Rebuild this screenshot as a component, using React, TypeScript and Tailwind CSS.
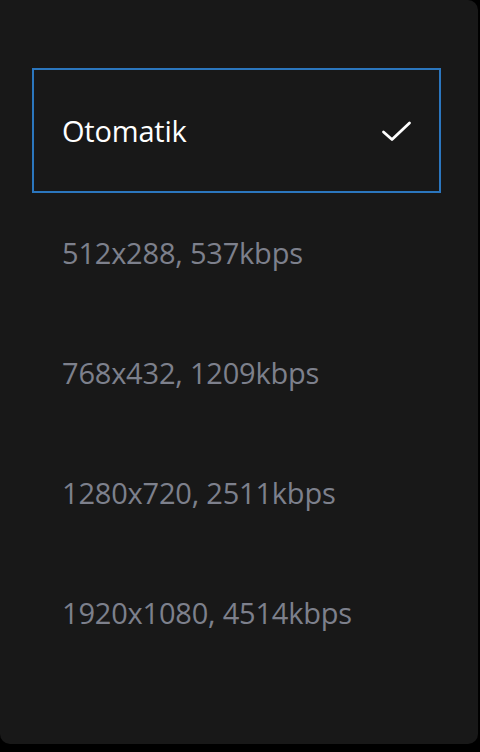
import React from "react";

const options = [
  "512x288, 537kbps",
  "768x432, 1209kbps",
  "1280x720, 2511kbps",
  "1920x1080, 4514kbps",
];

export default function App() {
  return (
    <div className="w-[480px] h-[752px] bg-black" style={{ fontFamily: '"Open Sans", "Noto Sans", sans-serif' }}>
      <div className="w-[478px] h-[744px] bg-[#181818] rounded-tr-[10px] rounded-b-[10px] pt-[68px] pl-[32px] pr-[37px]">
        <div className="h-[125px] border-2 border-[#2b76be] flex items-center justify-between pl-[28px] pr-[26px]">
          <span className="text-[29px] text-white tracking-[-0.2px]">Otomatik</span>
          <svg width="32" height="32" viewBox="0 0 32 32" fill="none">
            <path d="M2.5 17 L11 24.5 L28.5 8" stroke="white" strokeWidth="2.8" strokeLinecap="round" strokeLinejoin="round" />
          </svg>
        </div>
        {options.map((o) => (
          <div key={o} className="h-[120px] flex items-center pl-[30px]">
            <span className="text-[29px] text-[#7d808c] tracking-[-0.2px]">{o}</span>
          </div>
        ))}
      </div>
    </div>
  );
}
